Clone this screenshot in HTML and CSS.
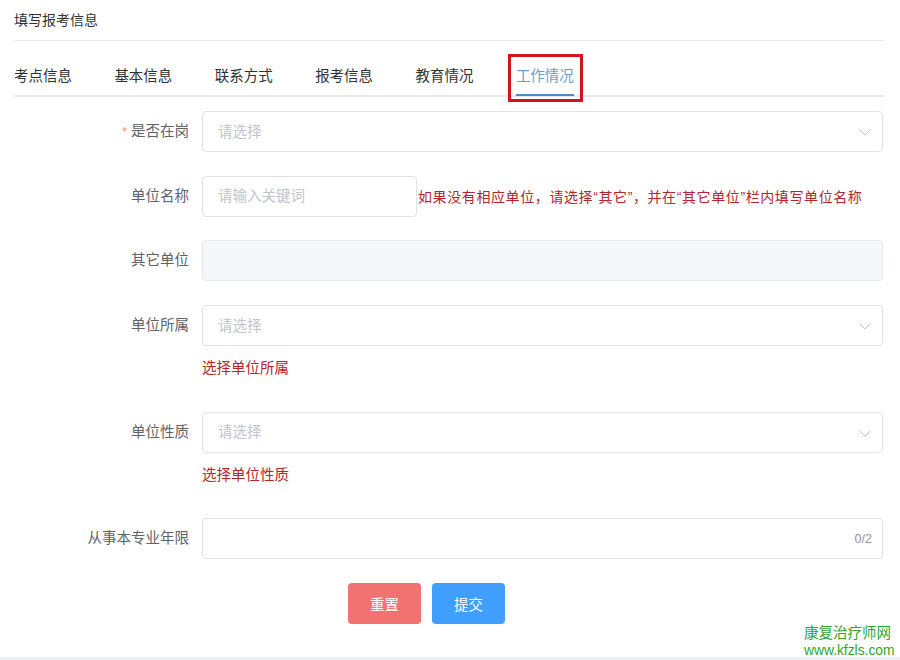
FILE: index.html
```html
<!DOCTYPE html>
<html lang="zh-CN">
<head>
<meta charset="utf-8">
<title>填写报考信息</title>
<link rel="stylesheet" href="styles.css">
</head>
<body>
<div class="page">
  <div class="title">填写报考信息</div>
  <div class="tabs">
    <div class="tab">考点信息</div>
    <div class="tab">基本信息</div>
    <div class="tab">联系方式</div>
    <div class="tab">报考信息</div>
    <div class="tab">教育情况</div>
    <div class="tab active">工作情况</div>
  </div>

  <form class="form">
    <div class="item">
      <label class="label"><span class="req">*</span>是否在岗</label>
      <div class="control">
        <div class="input select"><span class="ph">请选择</span><svg class="arrow" viewBox="0 0 12 7"><path d="M0.5 0.5 L6 6 L11.5 0.5" fill="none" stroke="#c0c4cc" stroke-width="1"/></svg></div>
      </div>
    </div>

    <div class="item">
      <label class="label">单位名称</label>
      <div class="control inline">
        <div class="input short"><span class="ph">请输入关键词</span></div>
        <span class="note">如果没有相应单位，请选择“其它”，并在“其它单位”栏内填写单位名称</span>
      </div>
    </div>

    <div class="item">
      <label class="label">其它单位</label>
      <div class="control">
        <div class="input disabled"></div>
      </div>
    </div>

    <div class="item with-hint">
      <label class="label">单位所属</label>
      <div class="control">
        <div class="input select"><span class="ph">请选择</span><svg class="arrow" viewBox="0 0 12 7"><path d="M0.5 0.5 L6 6 L11.5 0.5" fill="none" stroke="#c0c4cc" stroke-width="1"/></svg></div>
        <div class="hint">选择单位所属</div>
      </div>
    </div>

    <div class="item with-hint">
      <label class="label">单位性质</label>
      <div class="control">
        <div class="input select"><span class="ph">请选择</span><svg class="arrow" viewBox="0 0 12 7"><path d="M0.5 0.5 L6 6 L11.5 0.5" fill="none" stroke="#c0c4cc" stroke-width="1"/></svg></div>
        <div class="hint">选择单位性质</div>
      </div>
    </div>

    <div class="item">
      <label class="label">从事本专业年限</label>
      <div class="control">
        <div class="input count"><span class="counter">0/2</span></div>
      </div>
    </div>

    <div class="buttons">
      <button type="button" class="btn reset">重置</button>
      <button type="button" class="btn submit">提交</button>
    </div>
  </form>
</div>
<div class="footer-strip"></div>
<div class="watermark">
  <div class="wm-cn">康复治疗师网</div>
  <div class="wm-url">www.kfzls.com</div>
</div>
</body>
</html>
```

FILE: styles.css
```css
* { box-sizing: border-box; }
html, body {
  margin: 0;
  padding: 0;
  background: #ffffff;
}
body {
  width: 900px;
  height: 660px;
  position: relative;
  overflow: hidden;
  font-family: "Liberation Sans", "Noto Sans CJK SC", sans-serif;
  font-size: 14.5px;
  color: #303133;
}
.page {
  margin-left: 14px;
  width: 870px;
}
.title {
  height: 41px;
  line-height: 41px;
  font-size: 14px;
  color: #303133;
  border-bottom: 1px solid #e6e8eb;
}
.tabs {
  margin-top: 15px;
  display: flex;
  height: 41px;
  border-bottom: 2px solid #e8eaee;
}
.tab {
  position: relative;
  height: 39px;
  line-height: 40px;
  padding: 0 21.2px;
  color: #303133;
  white-space: nowrap;
}
.tab:first-child { padding-left: 0; }
.tab.active {
  color: #6d9dca;
}
.tab.active::before {
  content: "";
  position: absolute;
  left: 21.2px;
  right: 21.2px;
  bottom: -1px;
  height: 2px;
  background: #4f88c1;
}
.tab.active::after {
  content: "";
  position: absolute;
  left: 13px;
  right: 12px;
  top: -2px;
  bottom: -7px;
  border: 3px solid #d3141d;
}
.form {
  margin: 0;
  padding-top: 14px;
  width: 869px;
}
.item {
  display: flex;
  margin-bottom: 23.7px;
}
.label {
  width: 188px;
  flex: none;
  padding-right: 13px;
  text-align: right;
  height: 41px;
  line-height: 41px;
  color: #606266;
  white-space: nowrap;
}
.req {
  color: #f08a8a;
  margin-right: 4px;
  font-size: 13px;
}
.control {
  flex: 1;
  min-width: 0;
}
.control.inline {
  display: flex;
  align-items: center;
}
.input {
  position: relative;
  height: 41px;
  border: 1px solid #e0e2e6;
  border-radius: 4px;
  background: #fff;
  display: flex;
  align-items: center;
  padding: 0 15px;
}
.input.short {
  width: 215px;
  flex: none;
}
.input.disabled {
  background: #f5f7fa;
  border-color: #e6e8ec;
}
.ph {
  color: #c0c4cc;
  line-height: 20px;
}
.arrow {
  position: absolute;
  right: 11px;
  top: 17px;
  width: 12px;
  height: 7px;
}
.note {
  margin-left: 1px;
  color: #b3262d;
  font-size: 14px;
  letter-spacing: 0.6px;
  white-space: nowrap;
  line-height: 20px;
  padding-top: 2px;
}
.hint {
  height: 42px;
  padding-top: 12px;
  line-height: 20px;
  color: #b3262d;
  font-size: 14.5px;
}
.input.count {
  justify-content: flex-end;
  padding-right: 10px;
}
.counter {
  color: #909399;
  font-size: 12.5px;
}
.buttons {
  display: flex;
  gap: 11px;
  padding-left: 334px;
}
.btn {
  width: 73px;
  height: 41px;
  border: none;
  border-radius: 4px;
  color: #fff;
  font-family: "Liberation Sans", "Noto Sans CJK SC", sans-serif;
  font-size: 14.5px;
  padding: 0;
  cursor: pointer;
}
.btn.reset { background: #f27171; }
.btn.submit { background: #409eff; }
.footer-strip {
  position: absolute;
  left: 0;
  right: 0;
  bottom: 0;
  height: 3px;
  background: #eef0f3;
}
.watermark {
  position: absolute;
  left: 804px;
  top: 624px;
  color: #2fa52b;
  display: flex;
  flex-direction: column;
  gap: 3.5px;
}
.wm-cn {
  font-family: "Noto Sans CJK SC", sans-serif;
  font-size: 14.5px;
  line-height: 16px;
  height: 16px;
}
.wm-url {
  font-family: "Liberation Sans", sans-serif;
  font-size: 13.8px;
  line-height: 14px;
  height: 14px;
}
```
